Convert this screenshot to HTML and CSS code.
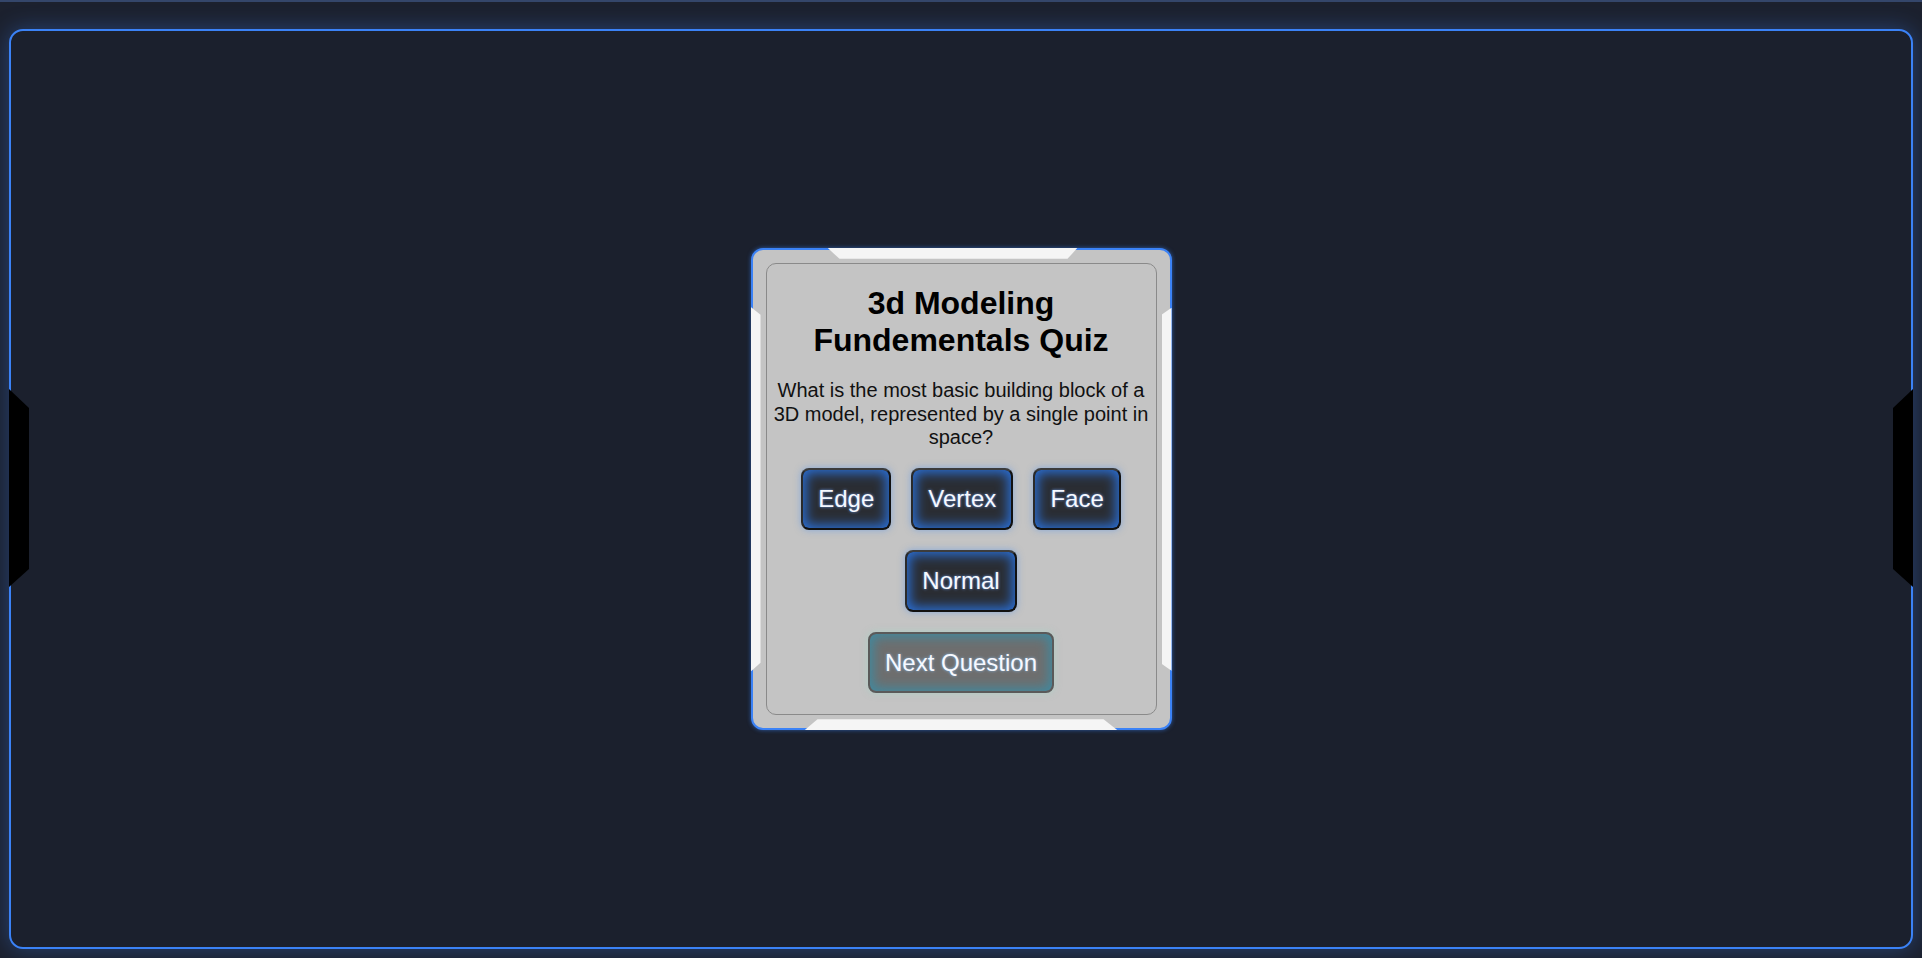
FILE: index.html
```html
<!DOCTYPE html>
<html lang="en">
<head>
<meta charset="utf-8">
<title>3d Modeling Fundementals Quiz</title>
<link rel="stylesheet" href="styles.css">
</head>
<body>
<div class="topbar"></div>
<div class="frame">
  <div class="side side-left"></div>
  <div class="side side-right"></div>
  <div class="card">
    <div class="notch notch-top"></div>
    <div class="notch notch-bottom"></div>
    <div class="notch notch-left"></div>
    <div class="notch notch-right"></div>
    <div class="panel">
      <h1 class="title">3d Modeling Fundementals Quiz</h1>
      <p class="question">What is the most basic building block of a 3D model, represented by a single point in space?</p>
      <div class="options">
        <button class="btn">Edge</button>
        <button class="btn">Vertex</button>
        <button class="btn">Face</button>
        <button class="btn">Normal</button>
      </div>
      <div class="actions">
        <button class="btn btn-next">Next Question</button>
      </div>
    </div>
  </div>
</div>
</body>
</html>
```
FILE: styles.css
```css
html, body {
  margin: 0;
  padding: 0;
  height: 100%;
}

body {
  background: #1c212e;
  font-family: "Liberation Sans", Arial, sans-serif;
  overflow: hidden;
}

.topbar {
  height: 2px;
  background: #34466a;
}

.frame {
  position: relative;
  box-sizing: border-box;
  height: calc(100vh - 38px);
  margin: 27px 9px 9px;
  border: 2px solid #3b82f6;
  border-radius: 14px;
  background: #1b202d;
  box-shadow: 0 0 22px rgba(59, 130, 246, 0.35);
  display: flex;
  align-items: center;
  justify-content: center;
}

.side {
  position: absolute;
  top: 50%;
  width: 20px;
  height: 198px;
  margin-top: -100px;
  background: #000;
}

.side-left {
  left: -2px;
  clip-path: polygon(0 0, 100% 19px, 100% 180px, 0 100%);
}

.side-right {
  right: -2px;
  clip-path: polygon(100% 0, 0 19px, 0 180px, 100% 100%);
}

.card {
  position: relative;
  box-sizing: border-box;
  width: 421px;
  padding: 13px;
  border: 2px solid #3b82f6;
  border-radius: 12px;
  background: #c4c4c4;
  box-shadow: 0 0 4px rgba(59, 130, 246, 0.6);
}

.notch {
  position: absolute;
  background: #f5f5f5;
}

.notch-top {
  top: -2px;
  left: 75px;
  width: 250px;
  height: 11px;
  clip-path: polygon(0 0, 100% 0, calc(100% - 10px) 100%, 12px 100%);
}

.notch-bottom {
  bottom: -2px;
  left: 52px;
  width: 313px;
  height: 11px;
  clip-path: polygon(13px 0, calc(100% - 14px) 0, 100% 100%, 0 100%);
}

.notch-left {
  left: -2px;
  top: 57px;
  width: 10px;
  height: 365px;
  clip-path: polygon(0 0, 100% 8px, 100% calc(100% - 9px), 0 100%);
}

.notch-right {
  right: -2px;
  top: 58px;
  width: 10px;
  height: 363px;
  clip-path: polygon(100% 0, 0 7px, 0 calc(100% - 7px), 100% 100%);
}

.panel {
  position: relative;
  border: 1px solid #8a8a8a;
  border-radius: 10px;
  padding: 0 2px 21px;
  text-align: center;
}

.title {
  margin: 21px 0;
  font-size: 32px;
  font-weight: bold;
  line-height: 1.15;
  color: #000;
}

.question {
  margin: 20px 0 19px;
  font-size: 20px;
  line-height: 23.3px;
  color: #111;
}

.options {
  display: flex;
  flex-wrap: wrap;
  justify-content: center;
  gap: 20px;
  padding: 0 20px;
}

.actions {
  display: flex;
  justify-content: center;
  margin-top: 20px;
}

.btn {
  font-family: "Liberation Sans", Arial, sans-serif;
  font-size: 24px;
  line-height: 27.6px;
  padding: 15px;
  color: #f6f9ff;
  background: #2a2d33;
  border: 2px solid #111;
  border-top-color: #3c3c3c;
  border-left-color: #2a2a2a;
  border-radius: 8px;
  box-shadow: inset 0 0 12px 3px #2a6fd6, 0 0 7px rgba(70, 140, 240, 0.5);
  text-shadow: 0 0 3px rgba(120, 170, 255, 0.9);
  cursor: pointer;
}

.btn-next {
  background: #6e6e6e;
  border-color: #5a5a5a;
  box-shadow: inset 0 0 12px 3px #3f8aa0, 0 0 7px rgba(150, 220, 200, 0.5);
  text-shadow: 0 0 3px rgba(140, 200, 255, 0.8);
}
```
